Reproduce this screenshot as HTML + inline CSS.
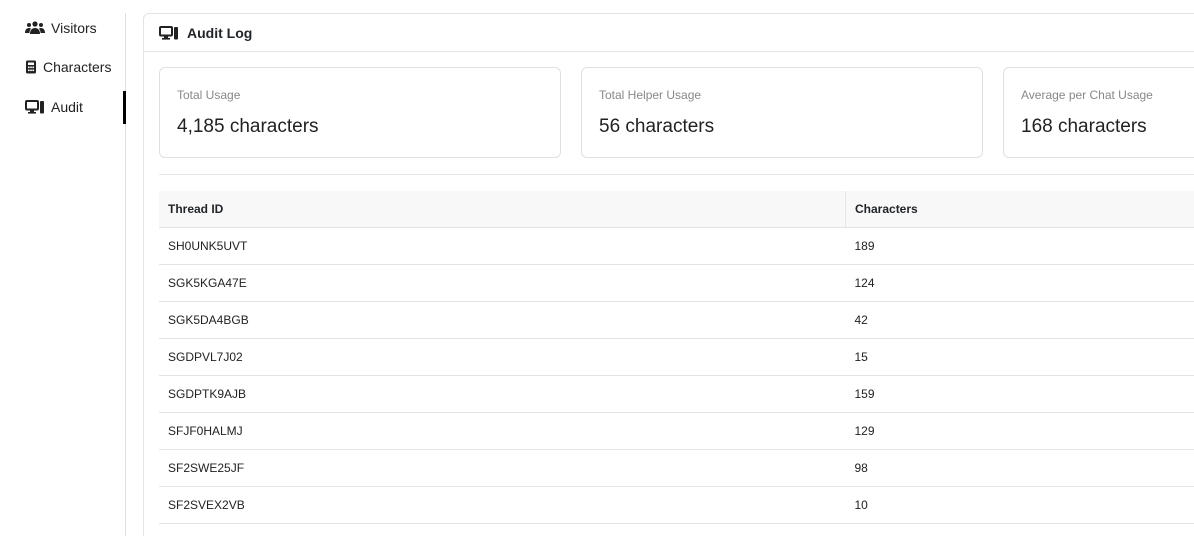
<!DOCTYPE html>
<html><head><style>
html,body{margin:0;width:1194px;height:536px;overflow:hidden}
body{background:#fff;font-family:"Segoe UI","Liberation Sans",sans-serif;color:#212529;position:relative}
.side{position:absolute;left:0;top:13px;width:125px;height:523px;border-right:1px solid #dee2e6}
.nav{position:absolute;left:25px;font-size:14px;display:flex;align-items:center;gap:6px;color:#222}
.bar{position:absolute;left:123px;top:91px;width:3px;height:33px;background:#000}
.card{position:absolute;left:143px;top:13px;width:1100px;height:540px;border:1px solid #e3e3e3;border-radius:6px}
.hdr{height:37px;border-bottom:1px solid #e6e6e6;display:flex;align-items:center;padding-left:15px;gap:8px;font-size:14px;font-weight:600}
.stat{position:absolute;top:53px;width:400px;height:89px;border:1px solid #e0e0e0;border-radius:6px}
.stat .l{position:absolute;left:17px;top:20px;font-size:12px;color:#888}
.stat .v{position:absolute;left:17px;top:48px;font-size:19px;color:#222}
.hr{position:absolute;left:15px;top:160px;width:1100px;border-top:1px solid #e6e6e6}
table{position:absolute;left:15px;top:177px;width:1100px;border-collapse:collapse;font-size:12px}
th{background:#f8f8f8;text-align:left;font-weight:600;height:36px;padding:0 9px;border-bottom:1px solid #e3e3e3}
td{height:36px;padding:0 9px;border-bottom:1px solid #e3e3e3;color:#222}
</style></head><body>
<div class="side"></div>
<div class="nav" style="top:20px"><svg width="20" height="14" viewBox="0 0 20 14"><circle cx="10" cy="3" r="2.6" fill="#222"/><circle cx="4" cy="4" r="2" fill="#222"/><circle cx="16" cy="4" r="2" fill="#222"/><path d="M5 13c0-4 2-6 5-6s5 2 5 6z" fill="#222"/><path d="M0 12c0-3 1.5-5 4-5 1 0 1.5.3 2 .7-1 1-1.5 2.5-1.6 4.3z M20 12c0-3-1.5-5-4-5-1 0-1.5.3-2 .7 1 1 1.5 2.5 1.6 4.3z" fill="#222"/></svg> Visitors</div>
<div class="nav" style="top:59px"><svg width="12" height="14" viewBox="0 0 12 14"><rect x="1" y="0.5" width="10" height="13" rx="1.5" fill="#222"/><rect x="3" y="2.5" width="6" height="2.5" fill="#fff"/><g fill="#fff"><rect x="3" y="6.5" width="1.6" height="1.6"/><rect x="5.2" y="6.5" width="1.6" height="1.6"/><rect x="7.4" y="6.5" width="1.6" height="1.6"/><rect x="3" y="9.5" width="1.6" height="1.6"/><rect x="5.2" y="9.5" width="1.6" height="1.6"/><rect x="7.4" y="9.5" width="1.6" height="1.6"/></g></svg> Characters</div>
<div class="nav" style="top:99px"><svg width="20" height="14" viewBox="0 0 20 14"><rect x="1" y="1" width="12" height="8.5" rx="1" fill="none" stroke="#222" stroke-width="2"/><rect x="5" y="10" width="4" height="2" fill="#222"/><rect x="3" y="12" width="8" height="1.6" fill="#222"/><rect x="15" y="1" width="4" height="12.5" rx="1" fill="#222"/></svg> Audit</div>
<div class="bar"></div>
<div class="card">
<div class="hdr"><svg width="20" height="14" viewBox="0 0 20 14"><rect x="1" y="1" width="12" height="8.5" rx="1" fill="none" stroke="#222" stroke-width="2"/><rect x="5" y="10" width="4" height="2" fill="#222"/><rect x="3" y="12" width="8" height="1.6" fill="#222"/><rect x="15" y="1" width="4" height="12.5" rx="1" fill="#222"/></svg>Audit Log</div>
<div class="stat" style="left:15px"><div class="l">Total Usage</div><div class="v">4,185 characters</div></div>
<div class="stat" style="left:437px"><div class="l">Total Helper Usage</div><div class="v">56 characters</div></div>
<div class="stat" style="left:859px"><div class="l">Average per Chat Usage</div><div class="v">168 characters</div></div>
<div class="hr"></div>
<table>
<tr><th style="width:668px;border-right:1px solid #e6e6e6">Thread ID</th><th>Characters</th></tr>
<tr><td>SH0UNK5UVT</td><td>189</td></tr>
<tr><td>SGK5KGA47E</td><td>124</td></tr>
<tr><td>SGK5DA4BGB</td><td>42</td></tr>
<tr><td>SGDPVL7J02</td><td>15</td></tr>
<tr><td>SGDPTK9AJB</td><td>159</td></tr>
<tr><td>SFJF0HALMJ</td><td>129</td></tr>
<tr><td>SF2SWE25JF</td><td>98</td></tr>
<tr><td>SF2SVEX2VB</td><td>10</td></tr>
</table>
</div>
</body></html>
